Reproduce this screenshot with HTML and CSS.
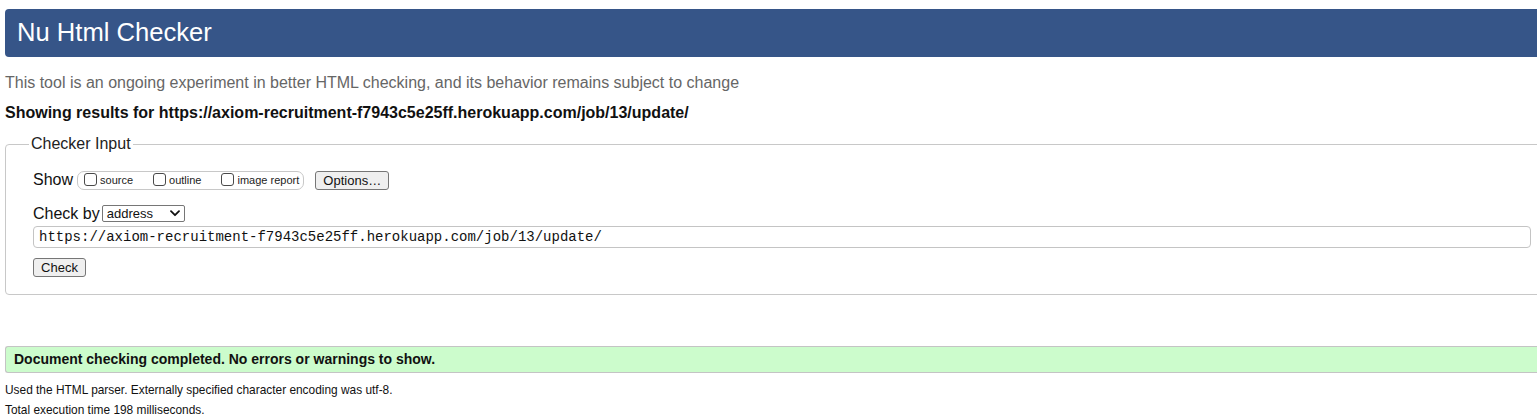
FILE: index.html
```html
<!DOCTYPE html>
<html lang="en">
<head>
<meta charset="utf-8">
<title>Nu Html Checker</title>
<link rel="stylesheet" href="styles.css">
</head>
<body>
<div class="page">
  <h1 class="title">Nu Html Checker</h1>
  <p class="intro">This tool is an ongoing experiment in better HTML checking, and its behavior remains subject to change</p>
  <p class="showing">Showing results for https://axiom-recruitment-f7943c5e25ff.herokuapp.com/job/13/update/</p>
  <fieldset class="checker">
    <legend class="legend">Checker Input</legend>
    <div class="row show-row">
      <span class="row-label">Show</span>
      <span class="opts">
        <label class="opt"><input type="checkbox" class="cb"><span>source</span></label>
        <label class="opt"><input type="checkbox" class="cb"><span>outline</span></label>
        <label class="opt"><input type="checkbox" class="cb"><span>image report</span></label>
      </span>
      <button class="btn options-btn" type="button">Options…</button>
    </div>
    <div class="row by-row">
      <span class="row-label">Check by</span>
      <span class="select">
        <span>address</span>
        <svg class="chev" width="10" height="7" viewBox="0 0 10 7"><path d="M1 1.2 L5 5.2 L9 1.2" fill="none" stroke="#111" stroke-width="1.8" stroke-linecap="round" stroke-linejoin="round"/></svg>
      </span>
    </div>
    <div class="url-row">
      <input class="url" type="text" value="https://axiom-recruitment-f7943c5e25ff.herokuapp.com/job/13/update/">
    </div>
    <div class="row check-row">
      <button class="btn check-btn" type="button">Check</button>
    </div>
  </fieldset>
  <p class="success">Document checking completed. No errors or warnings to show.</p>
  <p class="note">Used the HTML parser. Externally specified character encoding was utf-8.</p>
  <p class="note">Total execution time 198 milliseconds.</p>
</div>
</body>
</html>
```
FILE: styles.css
```css
html, body {
  margin: 0;
  padding: 0;
  overflow: hidden;
  background: #fff;
}
body {
  font-family: "Liberation Sans", Arial, sans-serif;
  color: #111;
}
.page {
  width: 1545px;
  padding-left: 5px;
  padding-top: 9px;
  box-sizing: border-box;
}
.title {
  margin: 0;
  height: 48px;
  line-height: 47px;
  padding-left: 12px;
  background: #365588;
  color: #fff;
  font-size: 25.6px;
  font-weight: normal;
  border-radius: 4px 0 0 4px;
  width: 1560px;
}
.intro {
  margin: 16px 0 0;
  line-height: 20px;
  font-size: 16px;
  color: #666;
}
.showing {
  margin: 10px 0 0;
  line-height: 20px;
  font-size: 16px;
  font-weight: bold;
  color: #111;
}
.checker {
  margin: 11px 0 0;
  border: 1px solid #c8c8c8;
  border-radius: 4px;
  padding: 16px 13px 17px 27px;
  min-width: 0;
}
.legend {
  margin-left: -4px;
  padding: 0 2px;
  font-size: 16px;
  line-height: 20px;
  color: #222;
}
.row {
  display: flex;
  align-items: center;
}
.row-label {
  font-size: 16px;
  line-height: 20px;
  color: #111;
}
.show-row {
  height: 20px;
}
.opts {
  display: inline-flex;
  align-items: center;
  height: 17px;
  margin-left: 4px;
  padding: 0 4px 0 6px;
  border: 1px solid #c8c8c8;
  border-radius: 7px;
}
.opt {
  display: inline-flex;
  align-items: center;
  font-size: 11px;
  color: #222;
}
.opt + .opt {
  margin-left: 20px;
}
.cb {
  appearance: none;
  -webkit-appearance: none;
  margin: 0 3px 0 0;
  width: 13px;
  height: 13px;
  border: 1px solid #4a4a4a;
  border-radius: 3px;
  background: #fff;
  box-sizing: border-box;
  position: relative;
  top: -1px;
}
.btn {
  font-family: "Liberation Sans", Arial, sans-serif;
  font-size: 13px;
  color: #111;
  background: #efefef;
  border: 1px solid #767676;
  border-radius: 3px;
  padding: 0 6px;
  height: 19px;
  line-height: 17px;
}
.options-btn {
  margin-left: 11px;
  padding: 0 7px;
  width: 74px;
}
.by-row {
  margin-top: 15px;
  height: 17px;
}
.select {
  display: inline-flex;
  align-items: center;
  justify-content: space-between;
  box-sizing: border-box;
  width: 83px;
  height: 17px;
  margin-left: 2px;
  padding: 0 4px 0 4px;
  border: 1px solid #767676;
  border-radius: 2px;
  font-size: 13px;
  color: #111;
  background: #fff;
}
.url-row {
  margin-top: 4px;
  display: flex;
}
.url {
  flex: 1;
  box-sizing: border-box;
  height: 22px;
  margin: 0;
  padding: 0 5px;
  border: 1px solid #c4c4c4;
  border-radius: 4px;
  font-family: "Liberation Mono", "DejaVu Sans Mono", monospace;
  font-size: 14px;
  color: #111;
  background: #fff;
  outline: none;
}
.check-row {
  margin-top: 10px;
}
.check-btn {
  font-size: 13px;
  padding: 0 6px;
  width: 53px;
}
.success {
  margin: 51px 0 0;
  height: 27px;
  box-sizing: border-box;
  line-height: 25px;
  padding-left: 8px;
  font-size: 14px;
  font-weight: bold;
  color: #111;
  background: #ccfccc;
  border: 1px solid #c4c4c4;
  border-right: none;
  border-radius: 3px 0 0 3px;
}
.note {
  margin: 0;
  font-size: 11.9px;
  line-height: 20px;
  color: #111;
}
.success + .note {
  margin-top: 7px;
}
```
